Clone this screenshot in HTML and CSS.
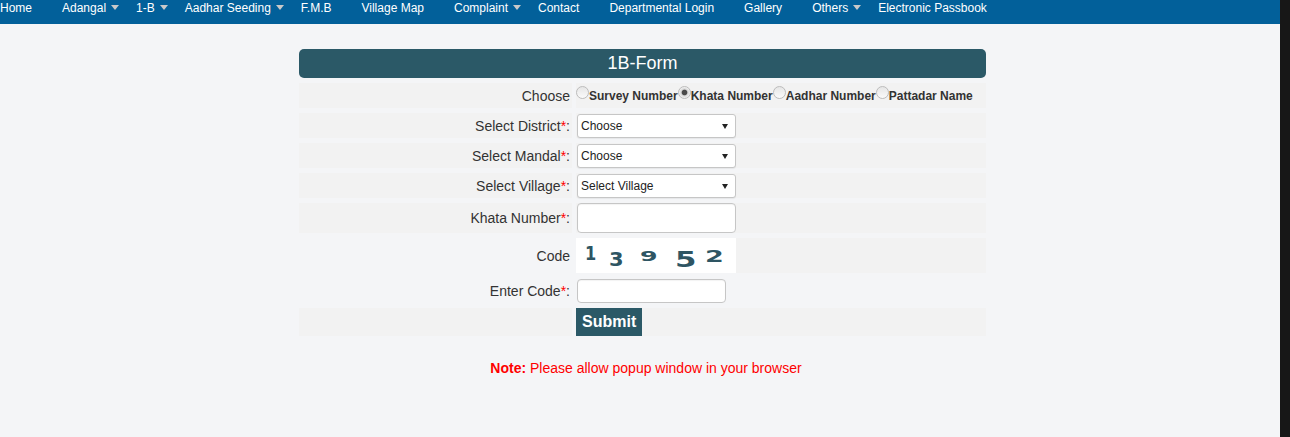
FILE: index.html
```html
<!DOCTYPE html>
<html lang="en">
<head>
<meta charset="utf-8"/>
<title>1B-Form</title>
<link rel="stylesheet" href="styles.css">
</head>
<body>
<div class="screen">
<div class="page">
<!-- top menu -->
<nav class="topnav">
<ul>
<li><a href="#">Home</a></li>
<li><a class="has-sub" href="#">Adangal</a></li>
<li><a class="has-sub" href="#">1-B</a></li>
<li><a class="has-sub" href="#">Aadhar Seeding</a></li>
<li><a href="#">F.M.B</a></li>
<li><a href="#">Village Map</a></li>
<li><a class="has-sub" href="#">Complaint</a></li>
<li><a href="#">Contact</a></li>
<li><a href="#">Departmental Login</a></li>
<li><a href="#">Gallery</a></li>
<li><a class="has-sub" href="#">Others</a></li>
<li><a href="#">Electronic Passbook</a></li>
</ul>
</nav>

<div class="main">
<div class="form-box">
<h2 class="form-title">1B-Form</h2>
<!-- 1B search form -->
<form class="form-grid">
<div class="lbl">Choose</div>
<div class="fld choose">
<label><input type="radio" name="searchBy"/>Survey Number</label><label><input type="radio" name="searchBy" checked/>Khata Number</label><label><input type="radio" name="searchBy"/>Aadhar Number</label><label><input type="radio" name="searchBy"/>Pattadar Name</label>
</div>

<div class="lbl">Select District<span class="req">*</span>:</div>
<div class="fld">
<span class="sel-wrap"><select><option>Choose</option></select></span>
</div>

<div class="lbl">Select Mandal<span class="req">*</span>:</div>
<div class="fld">
<span class="sel-wrap"><select><option>Choose</option></select></span>
</div>

<div class="lbl">Select Village<span class="req">*</span>:</div>
<div class="fld">
<span class="sel-wrap"><select><option>Select Village</option></select></span>
</div>

<div class="lbl">Khata Number<span class="req">*</span>:</div>
<div class="fld">
<input class="txt txt-big" type="text"/>
</div>

<div class="lbl bare">Code</div>
<div class="fld">
<div class="captcha">
<span class="dg d1">1</span><span class="dg d2">3</span><span class="dg d3">9</span><span class="dg d4">5</span><span class="dg d5">2</span>
</div>
</div>

<div class="lbl bare">Enter Code<span class="req">*</span>:</div>
<div class="fld bare">
<input class="txt txt-code" type="text"/>
</div>

<div class="lbl"></div>
<div class="fld submit-cell">
<button type="button" class="btn">Submit</button>
</div>
</form>
<p class="note"><b>Note:</b> Please allow popup window in your browser</p>
</div>
</div>
</div>
<div class="scrollbar"></div>
</div>
</body>
</html>
```

FILE: styles.css
```css
body {
  margin: 0;
  padding: 0;
  font-family: "Liberation Sans", Arial, sans-serif;
  color: #333;
}

.screen {
  display: flex;
  min-height: 100vh;
}

.page {
  flex: 1;
  background: #f4f5f7;
}

.scrollbar {
  width: 10px;
  background: #171717;
}

/* top menu */
.topnav {
  background: #02609a;
  height: 24px;
}

.topnav ul {
  list-style: none;
  margin: 0;
  padding: 0;
  display: flex;
}

.topnav li {
  flex: none;
}

.topnav a {
  display: flex;
  align-items: flex-start;
  padding: 1px 15px 0;
  color: #fff;
  font-size: 12px;
  line-height: 15px;
  text-decoration: none;
  white-space: nowrap;
}

.topnav li:first-child a {
  padding-left: 0;
}

.topnav a.has-sub {
  padding-right: 0;
}

.topnav a.has-sub::after {
  content: "";
  flex: none;
  width: 0;
  height: 0;
  border-left: 4.5px solid transparent;
  border-right: 4.5px solid transparent;
  border-top: 5px solid #c9c9c9;
  margin: 4px 2px 0 5px;
}

/* form */
.main {
  padding: 25px 0 0 5px;
}

.form-box {
  width: 687px;
  margin: 0 auto;
}

.form-title {
  margin: 0;
  height: 29px;
  line-height: 29px;
  background: #2b5967;
  color: #fff;
  font-size: 18px;
  font-weight: normal;
  text-align: center;
  border-radius: 5px;
}

.form-grid {
  display: grid;
  grid-template-columns: 273px 410px;
  grid-template-rows: 25px 25px 25px 25px 30px 35px 25px 28px;
  column-gap: 4px;
  row-gap: 5px;
  margin-top: 5px;
}

.lbl {
  background: #f2f2f2;
  display: flex;
  align-items: center;
  justify-content: flex-end;
  padding-right: 2px;
  font-size: 14px;
  color: #333;
}

.fld {
  background: #f2f2f2;
  display: flex;
  align-items: center;
}

.bare {
  background: transparent;
}

.req {
  color: #f00;
}

.choose label {
  display: flex;
  align-items: center;
  font-size: 12px;
  font-weight: bold;
  color: #333;
  white-space: nowrap;
}

.choose input {
  -webkit-appearance: none;
  appearance: none;
  box-sizing: border-box;
  width: 13px;
  height: 13px;
  margin: 0 0 6px 0;
  border: 1px solid #bcbcbc;
  border-radius: 50%;
  background: linear-gradient(#e6e6e6, #fafafa);
}

.choose input:checked {
  background: radial-gradient(circle, #4a4a4a 0, #4a4a4a 2.3px, #d6d6d6 3.3px, #f2f2f2 5.5px);
}

.sel-wrap {
  position: relative;
  display: inline-block;
}

.sel-wrap::after {
  content: "";
  position: absolute;
  right: 8px;
  top: 10px;
  border-left: 3.5px solid transparent;
  border-right: 3.5px solid transparent;
  border-top: 5px solid #222;
  pointer-events: none;
}

select {
  -webkit-appearance: none;
  appearance: none;
  display: block;
  width: 159px;
  height: 24px;
  margin: 0 0 0 1px;
  padding: 0 0 0 3px;
  border: 1px solid #c6c6c6;
  border-radius: 3px;
  background: #fff;
  font-family: "Liberation Sans", Arial, sans-serif;
  font-size: 12px;
  color: #222;
  box-shadow: 0 1px 1px rgba(0, 0, 0, 0.06);
}

.txt {
  box-sizing: border-box;
  margin: 0 0 0 1px;
  border: 1px solid #c6c6c6;
  border-radius: 4px;
  background: #fff;
  box-shadow: inset 0 1px 1px rgba(0, 0, 0, 0.05);
}

.txt-big {
  width: 159px;
  height: 30px;
}

.txt-code {
  width: 149px;
  height: 24px;
}

/* captcha picture */
.captcha {
  position: relative;
  width: 160px;
  height: 35px;
  background: #fff;
  align-self: stretch;
}

.dg {
  position: absolute;
  font-family: "DejaVu Sans", sans-serif;
  font-weight: bold;
  line-height: 1;
  color: #2e5563;
  transform-origin: left top;
}

.d1 { left: 9px;  top: 6px;  font-size: 19px; transform: scaleX(0.85); }
.d2 { left: 33px; top: 11px; font-size: 20px; transform: scaleX(1.05); }
.d3 { left: 64px; top: 11px; font-size: 14px; transform: scaleX(1.8); }
.d4 { left: 99px; top: 11px; font-size: 22px; transform: scaleX(1.4); }
.d5 { left: 129px; top: 12px; font-size: 15px; transform: scaleX(1.8); }

.submit-cell {
  align-items: stretch;
}

.btn {
  background: #2b5967;
  color: #fff;
  border: none;
  padding: 0 6px;
  font-family: "Liberation Sans", Arial, sans-serif;
  font-size: 16px;
  font-weight: bold;
  cursor: pointer;
}

.note {
  text-align: center;
  color: #f00;
  font-size: 14px;
  line-height: 16px;
  margin: 24px 0 0;
  padding-left: 7px;
}
```
